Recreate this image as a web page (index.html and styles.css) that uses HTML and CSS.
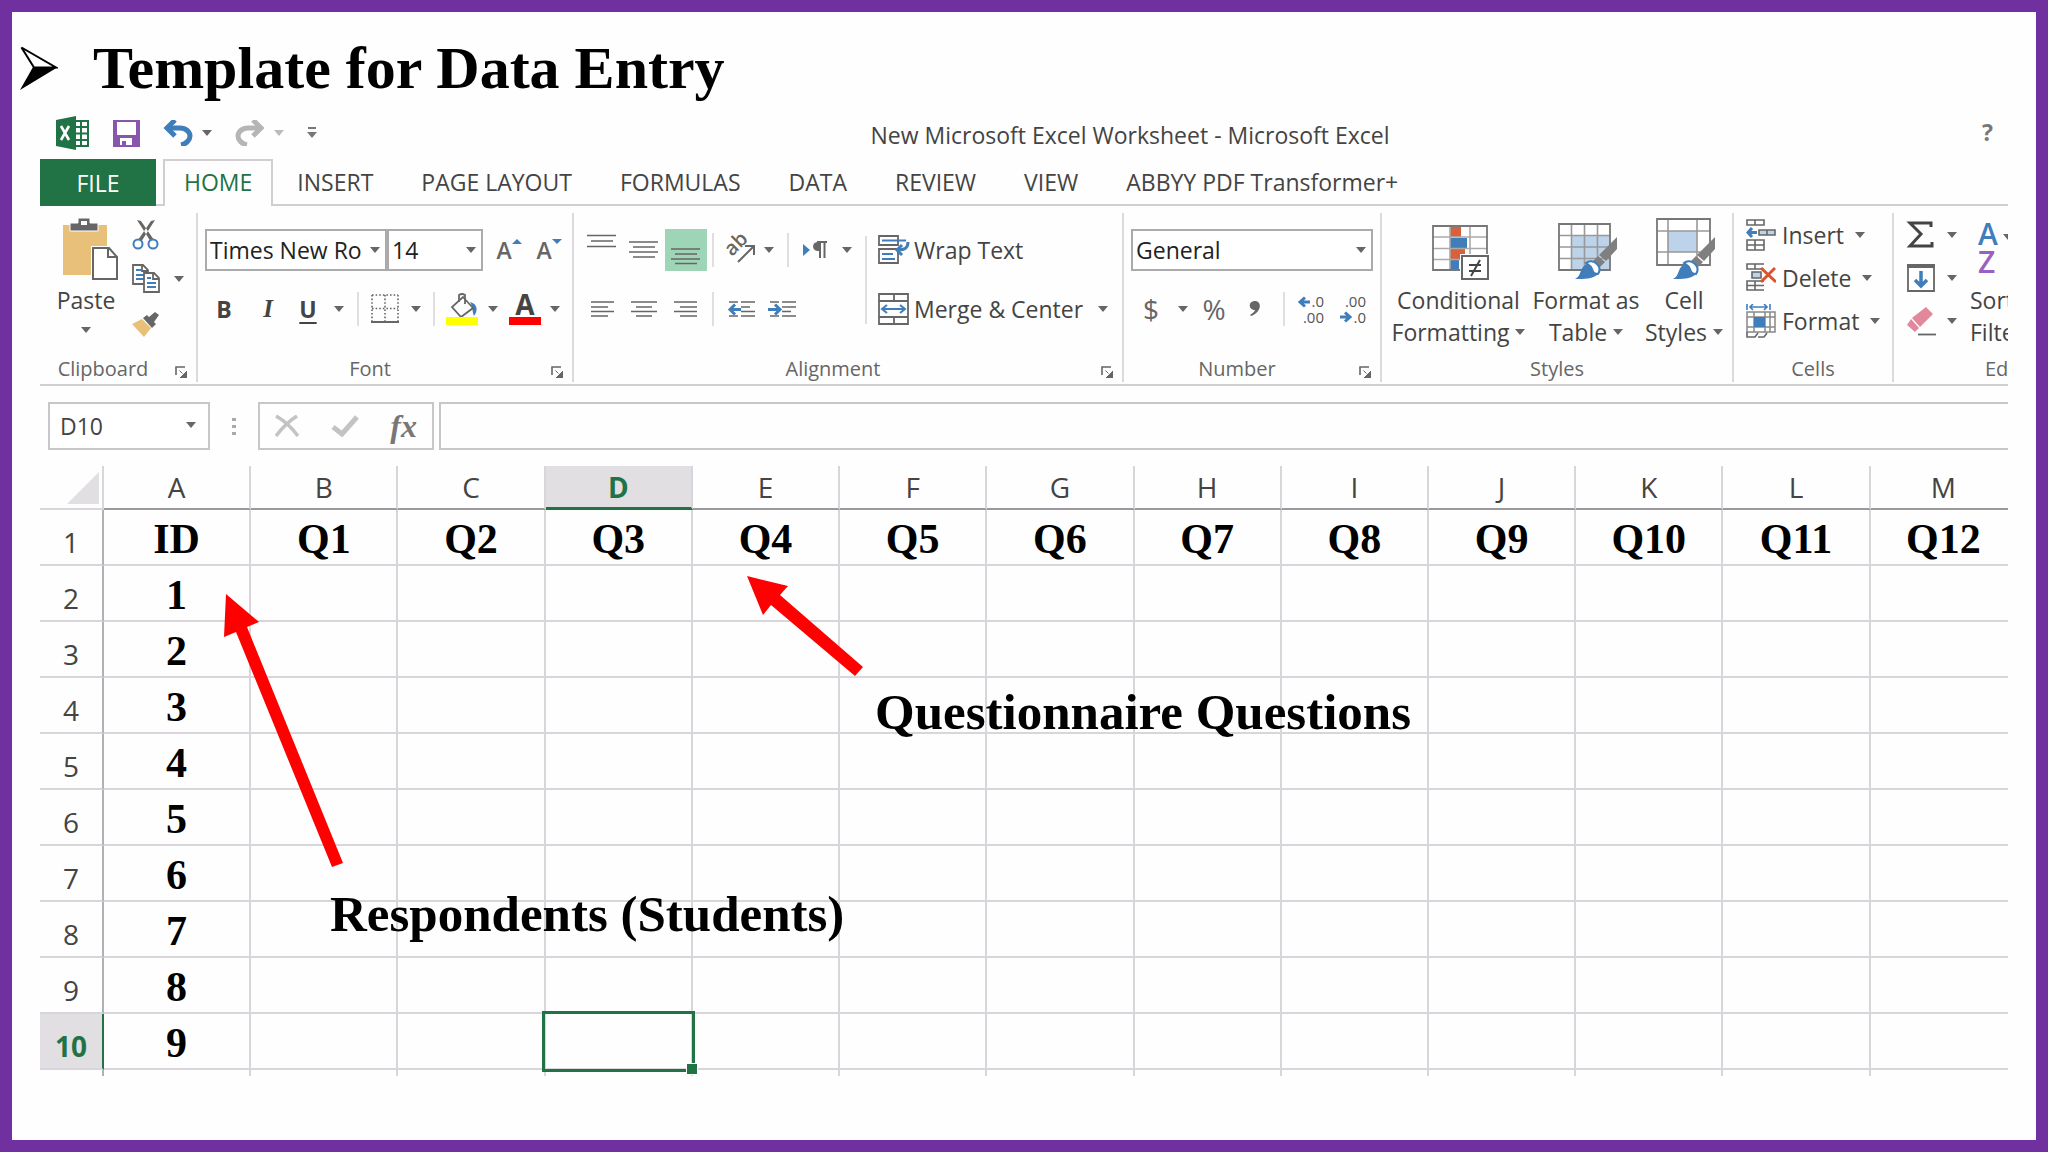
FILE: index.html
```
<!doctype html>
<html lang="en">
<head>
<meta charset="utf-8">
<title>Template for Data Entry</title>
<link rel="stylesheet" href="styles.css">
</head>
<body>
<svg class="defs">
	<symbol id="caret" viewBox="0 0 10 6"><path d="M0 0h10L5 6z"/></symbol>
	<symbol id="launch" viewBox="0 0 12 12"><path d="M1 9V1h9" fill="none" stroke="#666" stroke-width="1.6"/><path d="M4.500 4.500l3 3M12 5v7H5z" fill="#666" stroke="#666"/></symbol>
	<symbol id="brush" viewBox="0 0 44 44"><path d="M43 1v12L32 25l-7-6z" fill="#7f7f7f"/><path d="M24 20l7 6-5 5-7-6z" fill="#7f7f7f"/><path d="M1 43c5-2 5-8 8-12 4-5 10-6 14-3s4 8 0 11c-5 4-12 4-22 4z" fill="#3f7dbb"/><path d="M12 27c3-3 8-2 11 1s3 7 1 10c-4 0-5-2-6-5s-3-4-6-6z" fill="#fff" stroke="#3f7dbb" stroke-width="2"/></symbol>
</svg>

<div class="slide">
<h1 class="title">
	<svg width="38" height="44" viewBox="0 0 38 44"><path d="M1.500 1.500L36 21.500H14z" fill="none" stroke="#000" stroke-width="2"/><path d="M13 21h25L0 44z"/></svg>
	Template for Data Entry
</h1>

<div class="excel">

<div class="topbar">
	<div class="quick">
		<svg width="34" height="34" viewBox="0 0 34 34"><path d="M19 5h13v25H19z" fill="#fff" stroke="#217346" stroke-width="2"/><path d="M19 11h13M19 17.500h13M19 24h13M25 5v25" stroke="#217346" stroke-width="2"/><path d="M0 4l20-4v34L0 30z" fill="#217346"/><path d="M5 10l8 14M13 10L5 24" stroke="#fff" stroke-width="2.600"/></svg>
		<button aria-label="Save"><svg width="27" height="27" viewBox="0 0 27 27"><path d="M0 0h27v27H0z" fill="#8857ad"/><path d="M4 2h19v13H4zM7 18h12v7H7z" fill="#fff"/><path d="M9 21h4v4H9z" fill="#8857ad"/></svg></button>
		<button aria-label="Undo"><svg width="30" height="26" viewBox="0 0 30 26"><path d="M3 8h14c6 0 10 4 10 8s-4 8-9 9" fill="none" stroke="#3f7dbb" stroke-width="5"/><path d="M12 0L4 8l8 8" fill="none" stroke="#3f7dbb" stroke-width="5"/></svg></button>
		<svg class="caret"><use href="#caret"/></svg>
		<button aria-label="Redo"><svg width="30" height="26" viewBox="0 0 30 26"><path d="M27 8H13C7 8 3 12 3 16s4 8 9 9" fill="none" stroke="#b5b5b5" stroke-width="5"/><path d="M18 0l8 8-8 8" fill="none" stroke="#b5b5b5" stroke-width="5"/></svg></button>
		<svg class="caret dim"><use href="#caret"/></svg>
		<button aria-label="Customize"><svg width="10" height="12" viewBox="0 0 10 12"><path d="M1 1h8" stroke="#777" stroke-width="2"/><path d="M0 5h10l-5 6z" fill="#777"/></svg></button>
	</div>
	<div class="doc">New Microsoft Excel Worksheet - Microsoft Excel</div>
	<button class="help">?</button>
</div>

<nav class="tabs">
	<a class="file" href="#">FILE</a>
	<a class="on" href="#">HOME</a>
	<a href="#">INSERT</a>
	<a href="#">PAGE LAYOUT</a>
	<a href="#">FORMULAS</a>
	<a href="#">DATA</a>
	<a href="#">REVIEW</a>
	<a href="#">VIEW</a>
	<a href="#">ABBYY PDF Transformer+</a>
</nav>

<div class="ribbon">

	<section class="group">
		<div class="body clip">
			<button class="big">
				<svg width="64" height="64" viewBox="-8 0 64 64"><path d="M1 8h44v50H1z" fill="#e8c07a"/><path d="M8 14V6h8V1h12v5h8v8z" fill="#666" stroke="#fff" stroke-width="1"/><path d="M19 4h6v4h-6z" fill="#fff"/><path d="M29 29h27v34H29z" fill="#fff"/><path d="M31 31h16l8 9v22H31zM46 31v9h9" fill="#fff" stroke="#666" stroke-width="2"/></svg>
				<span>Paste</span>
				<svg class="caret"><use href="#caret"/></svg>
			</button>
			<div class="stack">
				<button aria-label="Cut"><svg width="28" height="30" viewBox="0 0 28 30"><path d="M5 0l4 1 13 19-3 2zM23 0l-4 1L6 20l3 2z" fill="#666"/><circle cx="6" cy="24" r="4.500" fill="#fff" stroke="#3f7dbb" stroke-width="2"/><circle cx="21" cy="24" r="4.500" fill="#fff" stroke="#3f7dbb" stroke-width="2"/></svg></button>
				<button aria-label="Copy"><svg width="28" height="30" viewBox="0 0 28 30"><path d="M1 1h10l5 5v14H1zM10 1v6h6" fill="#fff" stroke="#666" stroke-width="1.800"/><path d="M4 6h5M4 11h8M4 15h8" stroke="#3f7dbb" stroke-width="1.800"/><path d="M12 9h10l5 5v14H12zM21 9v6h6" fill="#fff" stroke="#666" stroke-width="1.800"/><path d="M15 14h4M15 19h9M15 23h9" stroke="#3f7dbb" stroke-width="1.800"/></svg></button>
				<svg class="caret"><use href="#caret"/></svg>
				<button aria-label="Format Painter"><svg width="28" height="26" viewBox="0 0 28 26"><path d="M0 13l10-5 9 9-7 9z" fill="#e8c07a"/><path d="M11 7l4-3 9 9-4 4zM17 6l6-5 4 3-5 7z" fill="#666"/></svg></button>
			</div>
		</div>
		<footer>Clipboard<svg class="launch"><use href="#launch"/></svg></footer>
	</section>

	<section class="group">
		<div class="body">
			<div class="row font1">
				<label class="combo"><select aria-label="Font"><option>Times New Ro</option></select><svg class="caret"><use href="#caret"/></svg></label>
				<label class="combo"><select aria-label="Font size"><option>14</option></select><svg class="caret"><use href="#caret"/></svg></label>
				<button aria-label="Grow font" class="grow">A<svg class="mini"><path d="M0 5h10L5 0z"/></svg></button>
				<button aria-label="Shrink font" class="grow">A<svg class="mini"><path d="M0 0h10L5 5z"/></svg></button>
			</div>
			<div class="row font2">
				<button class="b">B</button>
				<button class="i">I</button>
				<button class="u">U</button>
				<svg class="caret"><use href="#caret"/></svg>
				<i class="sep"></i>
				<button aria-label="Borders"><svg width="28" height="30" viewBox="0 0 28 30"><path d="M1 1h26M1 14.500h26M1 1v26M14 1v26M27 1v26" stroke="#666" stroke-width="1.600" stroke-dasharray="1.600 2"/><path d="M0 28h28" stroke="#666" stroke-width="2"/></svg></button>
				<svg class="caret"><use href="#caret"/></svg>
				<i class="sep"></i>
				<button aria-label="Fill color"><svg width="32" height="32" viewBox="0 0 32 32"><path d="M24 9c8 2 8 9 4 14-2-5-1-9-4-14z" fill="#3f7dbb"/><path d="M17 4l10 11-12 9L6 14z" fill="#fff" stroke="#666" stroke-width="1.800"/><path d="M13 9V2q3-2 6 0v9" fill="none" stroke="#666" stroke-width="1.800"/><path d="M0 24h32v8H0z" fill="#ff0"/></svg></button>
				<svg class="caret"><use href="#caret"/></svg>
				<button aria-label="Font color"><svg width="32" height="32" viewBox="0 0 32 32"><text x="16" y="22" class="fonta">A</text><path d="M0 24h32v8H0z" fill="red"/></svg></button>
				<svg class="caret"><use href="#caret"/></svg>
			</div>
		</div>
		<footer>Font<svg class="launch"><use href="#launch"/></svg></footer>
	</section>

	<section class="group">
		<div class="body align">
			<div>
				<div class="row align1">
					<button aria-label="Top align"><svg width="30" height="42" class="lines"><path d="M0 6.500h29M4 12h22M0 17.500h29"/></svg></button>
					<button aria-label="Middle align"><svg width="30" height="42" class="lines"><path d="M0 13h29M4 18h22M0 23h29M4 28h22"/></svg></button>
					<button aria-label="Bottom align" class="pressed"><svg width="30" height="42" class="lines"><path d="M0 20h29M4 25h22M0 30h29M4 34.500h22"/></svg></button>
					<i class="sep"></i>
					<button aria-label="Orientation"><svg width="32" height="32" viewBox="0 0 32 32"><text x="7" y="23" transform="rotate(-45 7 23)" class="ab">ab</text><path d="M13 28L28 13M20 12h9v9" fill="none" stroke="#666" stroke-width="2"/></svg></button>
					<svg class="caret"><use href="#caret"/></svg>
					<i class="sep"></i>
					<button aria-label="Text direction"><svg width="26" height="18" viewBox="0 0 26 18"><path d="M1 3v12l7-6z" fill="#3f7dbb"/><path d="M17 1h-1a5 4.500 0 0 0 0 9h1z" fill="#666"/><path d="M15 1h10M18 1v16M22.500 1v16" stroke="#666" stroke-width="2"/></svg></button>
					<svg class="caret"><use href="#caret"/></svg>
				</div>
				<div class="row align1">
					<button aria-label="Align left"><svg width="24" height="42" class="lines"><path d="M1 14h23M1 19h17M1 23.500h23M1 28h17"/></svg></button>
					<button aria-label="Center"><svg width="26" height="42" class="lines"><path d="M0 14h26M5 19h16M0 23.500h26M5 28h16"/></svg></button>
					<button aria-label="Align right"><svg width="24" height="42" class="lines"><path d="M0 14h23M6 19h17M0 23.500h23M6 28h17"/></svg></button>
					<i class="sep"></i>
					<button aria-label="Decrease indent"><svg width="28" height="42" class="lines"><path d="M2 14h9M14 14h14M14 19h9M14 23.500h14M2 28h9M14 28h14"/><path d="M14 21.500H3M8 16.500l-5 5 5 5" class="blue"/></svg></button>
					<button aria-label="Increase indent" class="wide"><svg width="28" height="42" class="lines"><path d="M2 14h9M14 14h14M14 19h14M14 23.500h9M2 28h9M14 28h14"/><path d="M0 21.500h11M7 16.500l5 5-5 5" class="blue"/></svg></button>
				</div>
			</div>
			<i class="sep tall"></i>
			<div>
				<button class="wide-btn"><svg width="32" height="30" viewBox="0 0 32 30"><path d="M1 1h19v9H1zM1 14h19v14H1z" fill="#fff" stroke="#666" stroke-width="1.800"/><path d="M4 5.500h24M4 19h11M4 24h13" stroke="#3f7dbb" stroke-width="1.800"/><path d="M30 7c0 6-3 8-10 8M24 10l-5 5 5 5" fill="none" stroke="#3f7dbb" stroke-width="3"/></svg>Wrap Text</button>
				<button class="wide-btn"><svg width="32" height="32" viewBox="0 0 32 32"><path d="M1 1h29v30H1zM1 8h29M1 24h29M16 1v7M16 24v7" fill="none" stroke="#666" stroke-width="1.800"/><path d="M5 16h21M9 12l-5 4 5 4M22 12l5 4-5 4" fill="none" stroke="#3f7dbb" stroke-width="2"/></svg>Merge &amp; Center<svg class="caret"><use href="#caret"/></svg></button>
			</div>
		</div>
		<footer>Alignment<svg class="launch"><use href="#launch"/></svg></footer>
	</section>

	<section class="group">
		<div class="body">
			<label class="combo"><select aria-label="Number format"><option>General</option></select><svg class="caret"><use href="#caret"/></svg></label>
			<div class="row num">
				<button class="sym">$</button>
				<svg class="caret"><use href="#caret"/></svg>
				<button class="sym">%</button>
				<button aria-label="Comma style"><svg width="12" height="16" viewBox="0 0 12 16"><path d="M6 0c7 0 7 11-4 15l-1-1c3-2 5-4 5-5C-1 9-1 0 6 0z" fill="#666"/></svg></button>
				<i class="sep"></i>
				<button aria-label="Increase decimal"><svg width="28" height="32" viewBox="0 0 28 32" class="dec"><path d="M12 9H2M7 4.500L2 9l5 4.500"/><text x="26" y="14">.0</text><text x="26" y="30">.00</text></svg></button>
				<button aria-label="Decrease decimal"><svg width="28" height="32" viewBox="0 0 28 32" class="dec"><text x="27" y="14">.00</text><text x="27" y="30">.0</text><path d="M1 24h10M6 19.500l5 4.500-5 4.500"/></svg></button>
			</div>
		</div>
		<footer>Number<svg class="launch"><use href="#launch"/></svg></footer>
	</section>

	<section class="group">
		<div class="body styles">
			<button class="big">
				<svg width="60" height="64" viewBox="-3 0 60 64"><path d="M1 9h54v44H1z" fill="#fff"/><path d="M18 9h11v11H18zM18 32h15v11H18z" fill="#d9603c"/><path d="M18 21h17v10H18zM18 43h9v10H18z" fill="#3f7dbb"/><path d="M1 20h54M1 31.500h54M1 42.500h54M18 9v44M38 9v44" stroke="#aaa" stroke-width="1.600"/><path d="M1 9h54v44H1z" fill="none" stroke="#777" stroke-width="1.800"/><path d="M28 37h29v27H28z" fill="#fff"/><path d="M30 39h26v23H30z" fill="#fff" stroke="#666" stroke-width="2"/><path d="M37 48h12M37 54h12M48 43l-9 16" stroke="#444" stroke-width="2"/></svg>
				<span>Conditional<br>Formatting <svg class="caret"><use href="#caret"/></svg></span>
			</button>
			<button class="big">
				<svg width="64" height="64" viewBox="-4 0 64 64"><path d="M1 7h51v46H1z" fill="#fff"/><path d="M14 19h38v34H14z" fill="#bcd3ea"/><path d="M1 18.500h51M1 30h51M1 41.500h51M13.500 7v46M26.500 7v46M39.500 7v46" stroke="#999" stroke-width="1.600"/><path d="M1 7h51v46H1z" fill="none" stroke="#777" stroke-width="1.800"/><use href="#brush" x="16" y="19" width="44" height="44"/></svg>
				<span>Format as<br>Table <svg class="caret"><use href="#caret"/></svg></span>
			</button>
			<button class="big">
				<svg width="64" height="64" viewBox="-4 0 64 64"><path d="M1 2h53v46H1z" fill="#fff"/><path d="M12 14h29v21H12z" fill="#bcd3ea"/><path d="M1 14h53M1 35h53M12 2v46M41 2v46" stroke="#999" stroke-width="1.600"/><path d="M1 2h53v46H1z" fill="none" stroke="#777" stroke-width="1.800"/><use href="#brush" x="16" y="19" width="44" height="44"/></svg>
				<span>Cell<br>Styles <svg class="caret"><use href="#caret"/></svg></span>
			</button>
		</div>
		<footer>Styles</footer>
	</section>

	<section class="group">
		<div class="body cells">
			<button><svg width="30" height="32" viewBox="0 0 30 32"><path d="M1 1h17v5H1zM9 1v5M1 21h17v10H1zM1 26h17M9 21v10" fill="#fff" stroke="#666" stroke-width="1.600"/><path d="M13 11h16v5H13zM21 11v5" fill="#bcd3ea" stroke="#666" stroke-width="1.600"/><path d="M11 13.500H2M6 9l-4 4.500 4 4.500" fill="none" stroke="#3f7dbb" stroke-width="3"/></svg>Insert<svg class="caret"><use href="#caret"/></svg></button>
			<button><svg width="30" height="30" viewBox="0 0 30 30"><path d="M18 1H1v5h17M9 1v5M18 18H1v9h17M1 22.500h17M9 18v9" fill="none" stroke="#666" stroke-width="1.600"/><path d="M6 9h9v6H6z" fill="#bcd3ea" stroke="#666" stroke-width="1.600"/><path d="M15 5l15 14M29 5L15 19" stroke="#d9532c" stroke-width="3"/></svg>Delete<svg class="caret"><use href="#caret"/></svg></button>
			<button><svg width="30" height="34" viewBox="0 0 30 34"><path d="M1 0v6M24 0v6M4 3h17M7 0L4 3l3 3M18 0l3 3-3 3" fill="none" stroke="#3f7dbb" stroke-width="1.600"/><path d="M1 8h28v20H1zM1 13h28M1 23h28M8 8v20M19 8v20M24 8v20" fill="#fff" stroke="#888" stroke-width="1.500"/><path d="M8 13h11v10H8z" fill="#3f7dbb"/><path d="M1 28v5h8l3-4M12 33h6l3-4" fill="none" stroke="#666" stroke-width="1.600"/></svg>Format<svg class="caret"><use href="#caret"/></svg></button>
		</div>
		<footer>Cells</footer>
	</section>

	<section class="group last">
		<div class="body edit">
			<div class="cells">
				<button aria-label="AutoSum"><svg width="30" height="28" viewBox="0 0 30 28"><path d="M25 6V2H4l11 11L4 25h22v-4" fill="none" stroke="#444" stroke-width="3"/></svg><svg class="caret"><use href="#caret"/></svg></button>
				<button aria-label="Fill"><svg width="30" height="30" viewBox="0 0 30 30"><path d="M2 2h26v26H2z" fill="#fff" stroke="#666" stroke-width="1.800"/><path d="M1 1h28v4H1z" fill="#666"/><path d="M15 8v14M9 17l6 6 6-6" fill="none" stroke="#3f7dbb" stroke-width="3.500"/></svg><svg class="caret"><use href="#caret"/></svg></button>
				<button aria-label="Clear"><svg width="30" height="30" viewBox="0 0 30 30"><path d="M20 1l7 7-13 13-8-9zM5 13l8 9-4 4-8-7z" fill="#e2879c"/><path d="M12 28.500h18" stroke="#666" stroke-width="1.800"/></svg><svg class="caret"><use href="#caret"/></svg></button>
			</div>
			<button class="sort">
				<svg width="46" height="64" viewBox="0 0 46 64"><text x="8" y="28" fill="#3f7dbb" class="az">A</text><text x="8" y="56" fill="#9a5fc0" class="az">Z</text><path d="M33 17h10l-5 6z" fill="#666"/></svg>
				<span>Sort &amp;<br>Filter</span>
			</button>
		</div>
		<footer>Editing</footer>
	</section>
</div>

<div class="fbar">
	<label class="combo name"><input aria-label="Name box" value="D10"><svg class="caret"><use href="#caret"/></svg></label>
	<svg class="dots" width="4" height="18" viewBox="0 0 4 18"><path d="M0 0h4v3H0zM0 7h4v3H0zM0 14h4v3H0z" fill="#aaa"/></svg>
	<div class="fx">
		<button aria-label="Cancel"><svg width="24" height="22" viewBox="0 0 24 22"><path d="M1 1c9 5 16 12 22 20M22 1C14 6 7 13 1 21" fill="none" stroke="#c4c2c4" stroke-width="3.500"/></svg></button>
		<button aria-label="Enter"><svg width="28" height="22" viewBox="0 0 28 22"><path d="M2 12l9 7L26 2" fill="none" stroke="#c4c2c4" stroke-width="5"/></svg></button>
		<button class="fn">fx</button>
	</div>
	<input class="formula" aria-label="Formula bar">
</div>

<div class="sheet">
	<table class="grid"><thead></thead><tbody></tbody></table>
</div>
</div>

<!-- callouts over the sheet -->
<svg class="arrows" width="700" height="320" viewBox="0 0 700 320">
	<path d="M26 24l33 28-12 5 96 236-11 4L36 62l-12 5z"/>
	<path d="M547 6l41 10-8 9 83 72-8 9-84-71-8 10z"/>
</svg>
<p class="note students">Respondents (Students)</p>
<p class="note questions">Questionnaire Questions</p>
</div>

<script>
var COLS='ABCDEFGHIJKLM';
var ROWS=10;
var head='<tr><th class="corner"><svg width="32" height="32"><path d="M32 0v32H0z"/></svg></th>';
var body='';
var r,c,text;
for (c=0;c<COLS.length;c++)
	head+='<th'+(COLS[c]=='D'?' class="on"':'')+'>'+COLS[c]+'</th>';
for (r=1;r<=ROWS;r++){
	body+='<tr><th'+(r==ROWS?' class="on"':'')+'>'+r+'</th>';
	for (c=0;c<COLS.length;c++){
		text='';
		if (r==1) text=(c==0)?'ID':'Q'+c;
		else if (c==0) text=r-1;
		body+=(r==ROWS && COLS[c]=='D')?'<td class="sel"><b></b></td>':'<td>'+text+'</td>';
	}
	body+='</tr>';
}
body+='<tr class="stub"><th></th>';
for (c=0;c<COLS.length;c++) body+='<td></td>';
body+='</tr>';
document.querySelector('.grid thead').innerHTML=head+'</tr>';
document.querySelector('.grid tbody').innerHTML=body;
</script>
</body>
</html>
```
FILE: styles.css
```
*{
	box-sizing: border-box;
}
body{
	margin: 0;
	background: #fefefe;
	color: #444;
	font: 23px/32px "Open Sans", "Noto Sans", sans-serif;
}
.defs{
	position: absolute;
	width: 0;
	height: 0;
}
button{
	border: 0;
	padding: 0;
	background: none;
	color: inherit;
	font: inherit;
}
svg{
	display: block;
	flex: none;
}
.slide{
	position: relative;
	min-height: 100vh;
	border: 12px solid #7030a0;
	padding-top: 19px;
}
.title{
	display: flex;
	align-items: center;
	gap: 35px;
	margin: 0;
	padding-left: 8px;
	color: #000;
	font: bold 60px/74px "Liberation Serif", serif;
}
.excel{
	margin: 0 28px;
}
.caret{
	width: 10px;
	height: 6px;
	fill: #666;
}
.dim{
	fill: #bbb;
}

/* title bar */
.topbar{
	display: flex;
	height: 54px;
	align-items: center;
}
.quick{
	display: flex;
	width: 292px;
	align-items: center;
	padding: 2px 0 0 16px;
}
.quick button{
	margin-left: 23px;
}
.quick .caret{
	margin-left: 9px;
}
.doc{
	flex: 1;
	padding-top: 6px;
	text-align: center;
}
.help{
	width: 80px;
	padding-right: 15px;
	text-align: right;
	font-weight: bold;
	color: #777;
}

/* tabs */
.tabs{
	display: flex;
	height: 47px;
	border-bottom: 2px solid #d0ced0;
}
.tabs a{
	padding: 0 24px;
	line-height: 46px;
	color: #444;
	text-decoration: none;
	white-space: nowrap;
}
.tabs .file{
	width: 116px;
	height: 47px;
	margin-right: 7px;
	line-height: 48px;
	text-align: center;
	background: #217346;
	color: #fff;
}
.tabs .on{
	height: 47px;
	padding: 0 19px;
	border: 2px solid #d0ced0;
	border-bottom: 0;
	line-height: 42px;
	background: #fefefe;
	color: #217346;
}

/* ribbon */
.ribbon{
	display: grid;
	grid-template-columns: 158fr 376fr 550fr 258fr 352fr 160fr 114fr;
	height: 180px;
	padding: 7px 0;
	border-bottom: 2px solid #d0ced0;
	overflow: hidden;
}
.group{
	position: relative;
	min-width: 0;
	border-right: 2px solid #dcdadc;
}
.last{
	border: 0;
	overflow: hidden;
}
.body{
	height: 143px;
	padding: 16px 7px 0;
}
.group footer{
	color: #666;
	font-size: 20px;
	line-height: 26px;
	text-align: center;
}
.group:nth-child(-n+4) footer{
	padding-right: 30px;
}
.launch{
	position: absolute;
	right: 9px;
	bottom: 4px;
	width: 12px;
	height: 12px;
}
.row{
	display: grid;
	height: 42px;
	margin-bottom: 17px;
	place-items: center;
}
.sep{
	width: 2px;
	height: 34px;
	background: #e0dee0;
}
.tall{
	height: 88px;
	margin-top: 7px;
}
.combo{
	position: relative;
	display: block;
	width: 100%;
	height: 42px;
}
.combo select, .combo input{
	width: 100%;
	height: 100%;
	padding: 0 3px;
	border: 2px solid #ababab;
	border-radius: 0;
	outline: 0;
	appearance: none;
	background: #fff;
	color: #222;
	font: inherit;
}
.combo .caret{
	position: absolute;
	right: 7px;
	top: 18px;
}
.clip{
	display: flex;
	padding: 0;
}
.big{
	display: flex;
	flex-direction: column;
	align-items: center;
	justify-content: flex-start;
	padding-top: 4px;
	white-space: nowrap;
}
.big > svg{
	margin-bottom: 3px;
}
.big > .caret{
	margin-top: 11px;
}
.big span .caret{
	display: inline-block;
	margin: 0 0 6px;
}
.clip .big{
	width: 92px;
}
.stack{
	display: grid;
	flex: 1;
	grid-template-columns: 26px 26px;
	grid-template-rows: 44px 44px 46px;
	align-items: center;
}
.stack button{
	grid-column: 1;
}
.stack .caret{
	grid-column: 2;
	justify-self: end;
	grid-row: 2;
}

.font1{
	grid-template-columns: 182px 96px 52px 28px;
}
.font2{
	grid-template-columns: 38px 50px 30px 32px 5px 50px 12px 24px 32px 30px 34px 26px;
}
.grow{
	display: flex;
	font-weight: 600;
	color: #666;
}
.mini{
	width: 10px;
	height: 6px;
	margin-top: 5px;
	fill: #3f7dbb;
}
.b, .u{
	font-weight: bold;
}
.i{
	font: italic bold 25px "Liberation Serif", serif;
}
.u{
	line-height: 26px;
	text-decoration: underline;
	text-underline-offset: 4px;
}
.fonta{
	font: bold 28px "Open Sans", sans-serif;
	text-anchor: middle;
	fill: #444;
}

.align{
	display: flex;
}
.align1{
	grid-template-columns: 42px 42px 42px 12px 44px 12px 26px 28px 36px;
}
.align1 .wide{
	grid-column: span 2;
}
.pressed{
	background: #9fd5b7;
	width: 42px;
	padding-left: 6px;
}
.lines{
	fill: none;
	stroke: #666;
	stroke-width: 1.6;
}
.lines .blue{
	stroke: #3f7dbb;
	stroke-width: 3;
}
.ab{
	font-size: 20px;
	font-weight: 600;
	fill: #666;
}
.wide-btn{
	display: flex;
	height: 42px;
	margin: 0 0 17px 11px;
	align-items: center;
	gap: 4px;
	white-space: nowrap;
}
.wide-btn .caret{
	margin-left: 11px;
}

.num{
	grid-template-columns: 40px 24px 38px 44px 14px 42px 40px;
	margin-top: 17px;
}
.sym{
	font-size: 28px;
	color: #666;
}
.dec{
	fill: #555;
	font-size: 15px;
	text-anchor: end;
}
.dec path{
	fill: none;
	stroke: #3f7dbb;
	stroke-width: 3;
}

.styles{
	display: grid;
	grid-template-columns: 145px 110px 86px;
	padding: 0 4px;
}
.cells{
	padding: 0 12px;
}
.cells button{
	display: flex;
	height: 43px;
	align-items: center;
	gap: 6px;
	line-height: 28px;
}
.cells .caret{
	margin-left: 5px;
}
.edit{
	display: flex;
	padding: 0;
}
.edit .cells{
	padding: 0 0 0 12px;
}
.sort{
	display: flex;
	flex-direction: column;
	padding: 4px 0 0 13px;
	text-align: left;
	white-space: nowrap;
}
.sort svg{
	margin-bottom: 3px;
}
.az{
	font-size: 30px;
	font-weight: 600;
}
.last footer{
	padding-left: 91px;
	text-align: left;
}

/* formula bar */
.fbar{
	display: flex;
	height: 48px;
	margin: 16px 0;
	padding-left: 8px;
}
.fbar .name{
	width: 162px;
	height: 48px;
}
.name input{
	padding-left: 10px;
	border-color: #c8c6c8;
	color: #444;
}
.name .caret{
	right: 14px;
	top: 20px;
}
.dots{
	margin: 16px 22px 0;
}
.fx{
	display: flex;
	width: 176px;
	padding: 0 15px;
	border: 2px solid #c8c6c8;
	justify-content: space-between;
	align-items: center;
}
.fn{
	font: italic bold 32px "Liberation Serif", serif;
	color: #777;
}
.formula{
	flex: 1;
	margin-left: 5px;
	border: 2px solid #c8c6c8;
	border-right: 0;
	outline: 0;
	font: inherit;
	background: #fefefe;
}

/* worksheet, last column runs off the edge */
.sheet{
	overflow: hidden;
}
.grid{
	width: calc(100% + 10px);
	table-layout: fixed;
	border-spacing: 0;
}
.grid th, .grid td{
	height: 56px;
	padding: 0;
	border-right: 2px solid #d8d6da;
	border-bottom: 2px solid #d8d6da;
	text-align: center;
	vertical-align: bottom;
}
.grid th{
	font-weight: normal;
	font-size: 28px;
	line-height: 44px;
}
.grid td{
	color: #000;
	font: bold 42px/50px "Liberation Serif", serif;
}
.grid thead th{
	height: 44px;
	border-bottom-color: #9b999d;
	line-height: 42px;
}
.grid .corner{
	width: 64px;
	border-bottom-color: #d8d6da;
}
.corner svg{
	margin: 0 0 4px 27px;
	fill: #e1dfe1;
}
.grid tbody th{
	border-right-color: #b2b0b4;
}
.grid th.on{
	background: #e1dfe1;
	color: #217346;
	font-weight: bold;
}
.grid thead th.on{
	border-bottom: 3px solid #217346;
	line-height: 40px;
}
.grid tbody th.on{
	border-right-color: #217346;
}
.sel{
	position: relative;
}
.sel b{
	position: absolute;
	inset: -3px -4px -4px -4px;
	border: 3px solid #217346;
}
.sel b:after{
	content: "";
	position: absolute;
	right: -6px;
	bottom: -6px;
	width: 10px;
	height: 10px;
	border: 1px solid #fff;
	background: #217346;
}
.grid .stub th, .grid .stub td{
	height: 6px;
	border-bottom: 0;
	line-height: 0;
	font-size: 0;
}

.arrows{
	position: absolute;
	left: 188px;
	top: 558px;
	fill: red;
}
.note{
	position: absolute;
	margin: 0;
	color: #000;
	font: bold 51px/58px "Liberation Serif", serif;
}
.students{
	left: 318px;
	top: 873px;
}
.questions{
	left: 863px;
	top: 671px;
}
```
